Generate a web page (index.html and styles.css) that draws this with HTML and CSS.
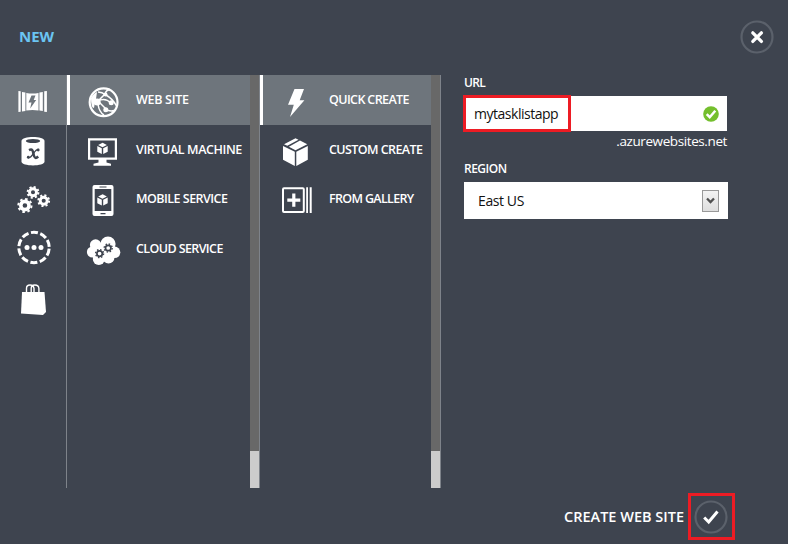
FILE: index.html
```html
<!DOCTYPE html>
<html lang="en">
<head>
<meta charset="utf-8">
<title>New web site</title>
<link rel="stylesheet" href="styles.css">
</head>
<body>
<div class="drawer">
  <header class="header">
    <h1 class="title">NEW</h1>
    <button class="round" aria-label="Close"><svg width="34" height="34" viewBox="0 0 34 34"><circle class="ring" cx="17" cy="17" r="15.5"/><path d="M12.8 12.8l8.6 8.6M21.4 12.8l-8.6 8.6" stroke="#fff" stroke-width="3.3" stroke-linecap="round"/></svg></button>
  </header>
  <main class="main">
    <nav class="rail">
      <a class="cell selected"><svg width="66" height="50" viewBox="0 75 66 50"><path d="M18.4 91l2.3.3v20.4l-2.3.3zM22 92l3.400.5v18.500l-3.400.5zM26.300 93q6.200 1.200 12.200 0v17.500q-6-1.100-12.200 0zM39.400 92.500l3.400-.5v19l-3.400-.5zM44.200 91.300l2.700-.3v21l-2.700-.3z"/><path class="ink-selected" d="M31.500 95.500h4l-1.800 4.500h2.500l-6 8.500 1.300-6h-3z"/></svg></a>
      <a class="cell"><svg width="66" height="49" viewBox="0 125 66 49"><path d="M21.500 141c0-5.200 23-5.200 23 0v20.500c0 5.200-23 5.200-23 0z"/><ellipse class="ink" cx="33" cy="141" rx="7.200" ry="2.100"/><path d="M29 150.200c4-2 4 1.500 4.600 4.300.8 3.500 2 4.500 4.600 2" fill="none" stroke="#3e444f" stroke-width="2.500"/><path d="M38.500 149.400c-4.500-.5-5.500 9-10.700 8.600" fill="none" stroke="#3e444f" stroke-width="1.300"/><circle class="ink" cx="38.200" cy="150" r="1.400"/><circle class="ink" cx="28.300" cy="157.200" r="1.400"/></svg></a>
      <a class="cell"><svg width="66" height="50" viewBox="0 174 66 50"><g fill="none" stroke="#fff"><g stroke-width="2.900"><circle cx="33" cy="192.300" r="3.500"/><circle cx="43.700" cy="200.700" r="3.500"/></g><circle cx="24.900" cy="205.500" r="4.100" stroke-width="3.600"/><g stroke-width="2" stroke-dasharray="2.100 2.140"><circle cx="33" cy="192.300" r="5.400"/><circle cx="43.700" cy="200.700" r="5.400"/></g><circle cx="24.900" cy="205.500" r="6.600" stroke-width="2" stroke-dasharray="2.550 2.634"/></g></svg></a>
      <a class="cell"><svg width="66" height="50" viewBox="0 224 66 50"><circle cx="34" cy="247.500" r="15.200" fill="none" stroke="#fff" stroke-width="3" stroke-dasharray="7.100 2.450" stroke-dashoffset="-1.200"/><circle cx="27" cy="247.500" r="2.500"/><circle cx="34" cy="247.500" r="2.500"/><circle cx="41" cy="247.500" r="2.500"/></svg></a>
      <a class="cell"><svg width="66" height="50" viewBox="0 274 66 50"><path d="M22 292h22.500l1.500 20-3 3-22-1.500z"/><path d="M26.500 293v-4.500q0-3.500 3.500-3.500t4 3.500v4.500M31.200 293v-4.500q0-3.500 3.700-3.500t4 3.500v4.500" fill="none" stroke="#fff" stroke-width="1.400"/></svg></a>
    </nav>
    <section class="column types">
      <div class="items">
        <a class="cell selected"><svg width="66" height="50" viewBox="70 75 66 50"><circle cx="103.600" cy="102.300" r="13.900" fill="none" stroke="#fff" stroke-width="2.200"/><g fill="none" stroke="#fff" stroke-width="1.500"><path d="M98 101L105 94Q106 90 110 89.500M98 92Q102 92 106 95Q113 99 116.500 106M98 101l8 8M98 101Q105 97 111 103M98 104Q99 112 104 115M105 109Q110 112 114 110.500"/></g><circle cx="97.200" cy="102" r="3.500"/><circle cx="105.500" cy="94.500" r="2"/><circle cx="111.200" cy="102.700" r="2.500"/><circle cx="105.800" cy="109.700" r="2.500"/><path d="M91 98q3-5 6-6l-1 7-1 3-1 6q-3 0-3-10z"/></svg><span class="t1">WEB SITE</span></a>
        <a class="cell"><svg width="66" height="49" viewBox="70 125 66 49"><path fill-rule="evenodd" d="M88 138.300h29v21.400H88zM90.200 140.500v17h24.600v-17z"/><path d="M98.500 159h8v3.500l4.500 1.200v2H93.500v-2l5-1.200z"/><g id="cube"><path d="M102.600 142.800l4.300 2.200-4.400 2.300-4.400-2.300zM97.300 146.100l4.500 2.200v5.800l-4.500-2.400zM107.700 146.100l-4.500 2.200v5.800l4.500-2.400z"/></g></svg><span class="t2">VIRTUAL MACHINE</span></a>
        <a class="cell"><svg width="66" height="50" viewBox="70 174 66 50"><path fill-rule="evenodd" d="M94.500 185h17q2 0 2 2v27q0 2-2 2h-17q-2 0-2-2v-27q0-2 2-2zM94.700 189v22h16.600v-22z"/><path class="ink" d="M99.500 186.500h7v1h-7zM100.500 213h5v1.200h-5z"/><use href="#cube" y="51.500"/></svg><span class="t3">MOBILE SERVICE</span></a>
        <a class="cell"><svg width="66" height="50" viewBox="70 224 66 50"><circle cx="95.600" cy="245" r="5.700"/><circle cx="92.500" cy="252" r="5.600"/><circle cx="108" cy="244" r="7.600"/><circle cx="114.500" cy="252.300" r="5.800"/><circle cx="98.800" cy="259" r="6"/><circle cx="108.500" cy="257.500" r="6"/><path d="M93 244h17v15H93z"/><g fill="none" stroke="#3e444f"><circle cx="99.600" cy="253.600" r="2.700" stroke-width="1.700"/><circle cx="108.200" cy="248" r="2.700" stroke-width="1.700"/><g stroke-width="1.400" stroke-dasharray="1.500 1.640"><circle cx="99.600" cy="253.600" r="4"/><circle cx="108.200" cy="248" r="4"/></g></g></svg><span class="t4">CLOUD SERVICE</span></a>
      </div>
      <div class="scroll"><div class="thumb"></div></div>
    </section>
    <section class="column methods">
      <div class="items">
        <a class="cell selected"><svg width="66" height="50" viewBox="263 75 66 50"><path d="M294.500 89h9.500l-4.300 11.300h4.700L290 117l3.800-12.300H288z"/></svg><span class="t5">QUICK CREATE</span></a>
        <a class="cell"><svg width="66" height="49" viewBox="263 125 66 49"><path d="M295.500 138.300l3 1.500-11.200 6-3.300-1.600zM300 140.500l7.300 3.700-11.800 6-6.600-3.400zM283 146l11.800 5.700v14.200L283 159.700zM307.800 146l-11.500 5.700v14.200l11.500-6.200z"/></svg><span class="t6">CUSTOM CREATE</span></a>
        <a class="cell"><svg width="66" height="50" viewBox="263 174 66 50"><rect x="283" y="188.200" width="20.800" height="23.700" rx="1" fill="none" stroke="#fff" stroke-width="2"/><path d="M292.200 193.500h3.200v5h4.900v3.200h-4.900v5h-3.200v-5h-4.900v-3.200h4.900zM306.200 187.300h1.800v25.600h-1.800zM309.700 187.300h2v25.600h-2z"/></svg><span class="t7">FROM GALLERY</span></a>
      </div>
      <div class="scroll"><div class="thumb"></div></div>
    </section>
    <form class="form">
      <label class="label url-label">URL</label>
      <div class="input"><span class="value">mytasklistapp</span><span class="mark-url"></span><svg width="16" height="16" viewBox="0 0 16 16"><circle cx="8" cy="8" r="7.800" fill="#74bf2d"/><path d="M3.700 8.200l3 3L12.300 4.800" fill="none" stroke="#fff" stroke-width="2.500"/></svg></div>
      <div class="suffix"><span>.azurewebsites.net</span></div>
      <label class="label region-label">REGION</label>
      <div class="select"><span class="region">East US</span><span class="arrow"><svg width="9" height="8" viewBox="0 0 9 8"><path d="M1 1.500l3.500 3.500L8 1.500" fill="none" stroke="#505050" stroke-width="2.300"/></svg></span></div>
    </form>
  </main>
  <footer class="footer">
    <span class="create">CREATE WEB SITE</span>
    <button class="confirm" aria-label="Create"><svg width="34" height="34" viewBox="0 0 34 34"><circle class="ring" cx="17" cy="17" r="15.500"/><path d="M10.200 17.500l4.500 4.500L23.500 11.500" fill="none" stroke="#fff" stroke-width="3"/></svg></button>
  </footer>
</div>
</body>
</html>
```
FILE: styles.css
```css
* { box-sizing: border-box; }
body { margin: 0; background: #3e444f; color: #fff; font-family: "Open Sans", "Noto Sans", sans-serif; }
svg { display: block; fill: #fff; flex: none; }
button { padding: 0; border: 0; background: none; }
.ring { fill: none; stroke: #5b616b; stroke-width: 2.2; }
.ink { fill: #3e444f; }
.ink-selected { fill: #6e757c; }
.drawer { width: 788px; height: 544px; display: flex; flex-direction: column; overflow: hidden; }
.header { height: 75px; display: flex; justify-content: space-between; padding: 20px 14px 0 19px; }
.title { margin: 6px 0 0; font-size: 15px; line-height: 20px; font-weight: 700; color: #6bc5f2; }
.round { height: 34px; }
.main { height: 413px; display: flex; }
.rail { width: 67px; border-right: 1px solid #7e838a; }
.cell { display: flex; align-items: center; white-space: nowrap; font-size: 12.5px; font-weight: 600; }
.selected { background: #6e757c; }
.cell span { line-height: 18px; margin-top: -1px; }
.cell .t1 { letter-spacing: -.3px; }
.cell .t2 { letter-spacing: -.4px; margin-top: 1px; }
.cell .t3 { letter-spacing: -.52px; }
.cell .t4 { letter-spacing: -.6px; }
.cell .t5 { letter-spacing: -.62px; }
.cell .t6 { letter-spacing: -.58px; margin-top: 1px; }
.cell .t7 { letter-spacing: -.67px; }
.column { display: flex; border-right: 1px solid #7e838a; }
.types { width: 193px; }
.methods { width: 181px; }
.items { flex: 1; min-width: 0; }
.column .selected { border-left: 3px solid #fff; }
.column .cell:not(.selected) { padding-left: 3px; }
.scroll { width: 9px; background: #686868; display: flex; align-items: flex-end; }
.thumb { width: 9px; height: 37px; background: #ccc; }
.form { width: 264px; margin-left: 23px; }
.label { display: block; font-size: 12px; font-weight: 600; line-height: 16px; letter-spacing: -.5px; }
.url-label { padding-bottom: 5px; letter-spacing: -.7px; }
.input { position: relative; height: 35px; background: #fff; color: #111; width: 263px; display: flex; align-items: center; justify-content: space-between; padding: 0 8px 0 10px; font-size: 14px; letter-spacing: -.48px; }
.mark-url { position: absolute; left: -1px; top: -1px; width: 108px; height: 37px; border: 3px solid #ed1c24; }
.suffix { text-align: right; width: 263px; font-size: 13.5px; line-height: 20px; height: 30px; letter-spacing: -.4px; }
.region-label { height: 21px; }
.select { height: 37px; background: #fff; color: #111; display: flex; align-items: center; justify-content: space-between; padding: 0 9px 0 14px; font-size: 14px; letter-spacing: -.4px; }
.arrow { width: 17px; height: 22px; border: 1px solid #999; background: linear-gradient(#f3f3f3, #dedede); display: grid; place-items: center; }
.footer { height: 56px; display: flex; justify-content: flex-end; padding: 5px 53px 0 0; }
.create { font-size: 14.5px; font-weight: 600; line-height: 20px; margin: 14px 4px 0 0; white-space: nowrap; }
.confirm { width: 47px; height: 47px; border: 3px solid #ed1c24; display: flex; align-items: center; padding-left: 2.5px; }
```
